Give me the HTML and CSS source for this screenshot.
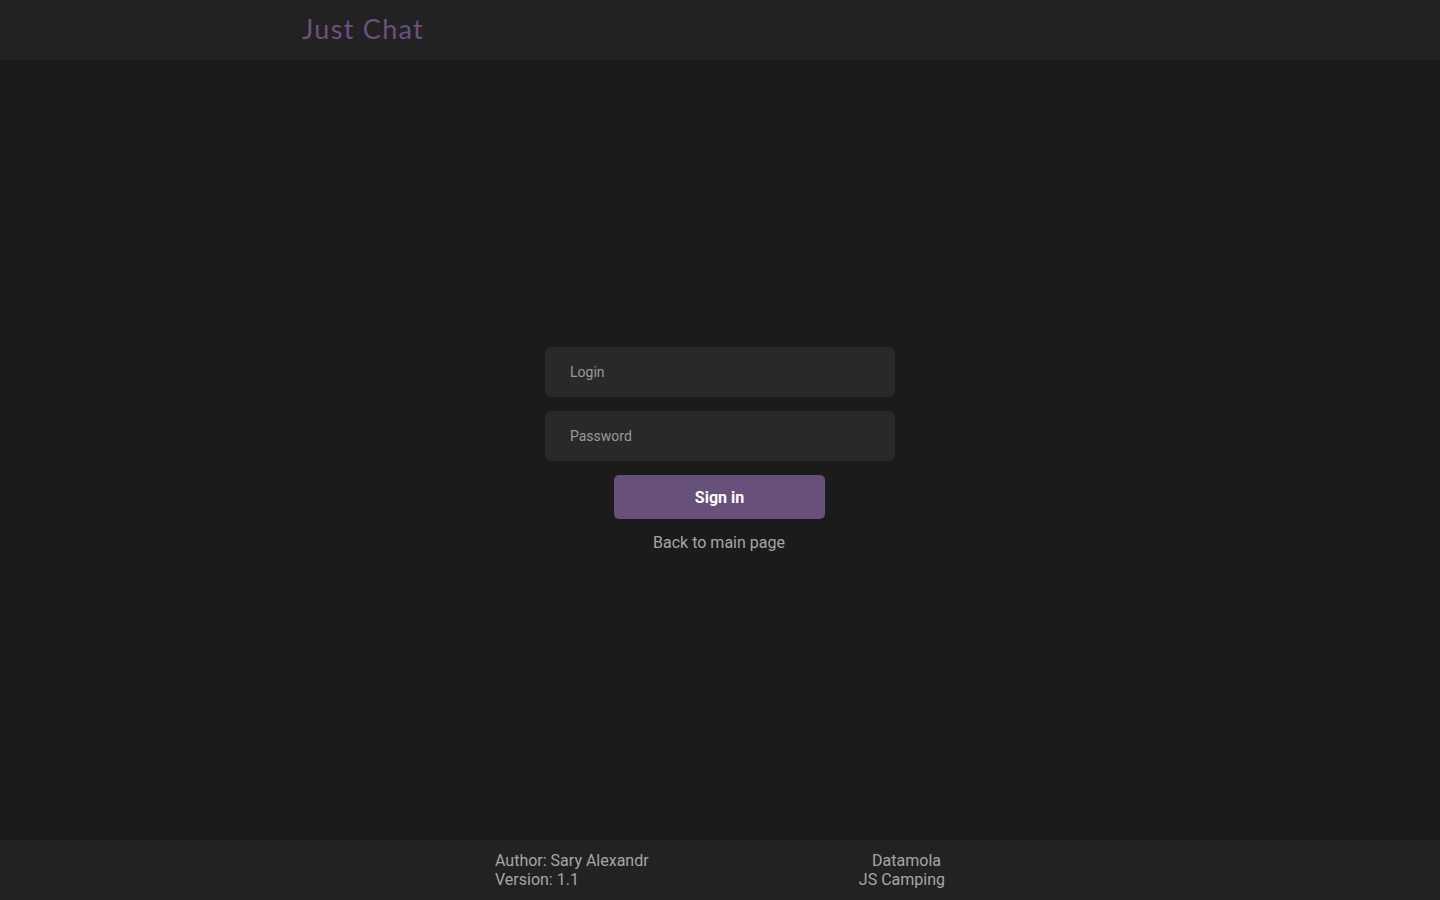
FILE: index.html
```html
<!DOCTYPE html>
<html lang="en">
<head>
<meta charset="utf-8">
<title>Just Chat</title>
<link rel="stylesheet" href="styles.css">
</head>
<body>
<header class="header">
  <div class="logo">Just Chat</div>
</header>
<main class="main">
  <form class="form">
    <input class="field" type="text" placeholder="Login">
    <input class="field" type="password" placeholder="Password">
    <button class="btn" type="button">Sign in</button>
    <a class="back" href="#">Back to main page</a>
  </form>
</main>
<footer class="footer">
  <div class="foot-left">
    <div>Author: Sary Alexandr</div>
    <div>Version: 1.1</div>
  </div>
  <div class="foot-right">
    <div class="dm">Datamola</div>
    <div>JS Camping</div>
  </div>
</footer>
</body>
</html>
```

FILE: styles.css
```css
* { box-sizing: border-box; }
html, body { margin: 0; height: 100%; }
body {
  background: #1b1b1b;
  font-family: Roboto, "Liberation Sans", sans-serif;
  display: flex;
  flex-direction: column;
  min-height: 100vh;
}
.header {
  height: 60px;
  background: #222222;
  display: flex;
  align-items: center;
  padding-left: 302px;
  flex-shrink: 0;
}
.logo {
  color: #6a5180;
  font-family: "Lato", "Noto Sans", sans-serif;
  font-size: 27px;
  letter-spacing: 1.3px;
  margin-top: -4px;
}
.main {
  flex: 1;
  display: flex;
  align-items: center;
  justify-content: center;
}
.form {
  width: 350px;
  display: flex;
  flex-direction: column;
  align-items: center;
  gap: 14px;
  margin-top: -1px;
}
.field {
  width: 350px;
  height: 50px;
  background: #292929;
  border: none;
  border-radius: 6px;
  padding: 0 25px;
  font-family: Roboto, sans-serif;
  font-size: 14px;
  color: #ddd;
  outline: none;
}
.field::placeholder { color: #9a9a9a; }
.btn {
  width: 211px;
  height: 44px;
  background: #67507a;
  border: none;
  border-radius: 5px;
  color: #fff;
  font-family: Roboto, sans-serif;
  font-weight: 700;
  font-size: 16px;
  margin-right: 1px;
}
.back {
  color: #a6a6a6;
  font-size: 16px;
  text-decoration: none;
  margin-top: 0;
  margin-right: 2px;
}
.footer {
  height: 60px;
  background: #222222;
  flex-shrink: 0;
  display: flex;
  justify-content: space-between;
  padding: 11px 0 0;
  width: 100%;
  padding-left: 495px;
  padding-right: 495px;
  color: #a6a6a6;
  font-size: 16px;
  line-height: 19px;
}
.foot-right { text-align: right; }
.dm { padding-right: 4px; }
```
